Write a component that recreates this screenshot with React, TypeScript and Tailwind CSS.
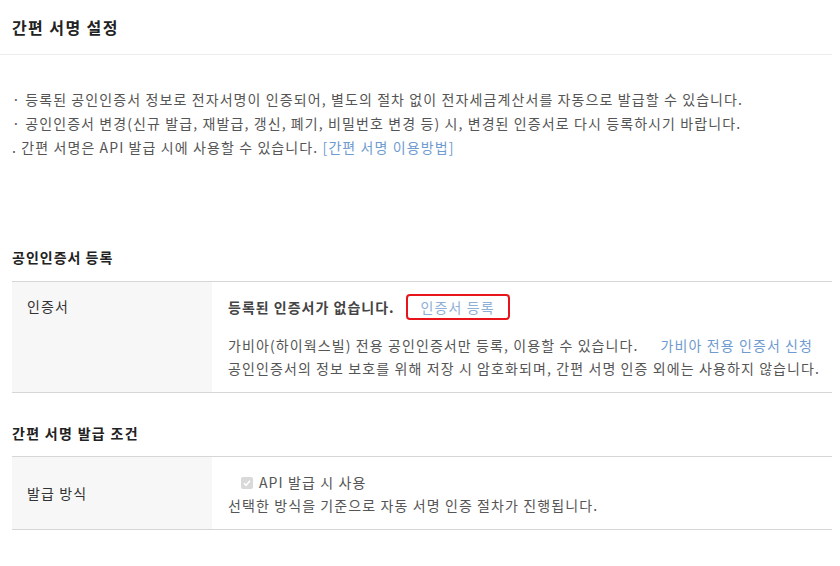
import React from "react";

const font = { fontFamily: '"Noto Sans CJK KR", "Noto Sans", sans-serif' };

export default function App() {
  return (
    <div className="w-[840px] h-[566px] bg-white text-[14px] text-[#555] tracking-[1.1px]" style={font}>
      <div className="w-[832px]">
        <div className="h-[55px] flex items-center pl-3 border-b border-[#ececec]">
          <h1 className="text-[16px] font-bold text-[#222] tracking-[1.4px]">간편 서명 설정</h1>
        </div>
        <div className="pl-3 pt-[32px] leading-[24px]">
          <p>· 등록된 공인인증서 정보로 전자서명이 인증되어, 별도의 절차 없이 전자세금계산서를 자동으로 발급할 수 있습니다.</p>
          <p>· 공인인증서 변경(신규 발급, 재발급, 갱신, 폐기, 비밀번호 변경 등) 시, 변경된 인증서로 다시 등록하시기 바랍니다.</p>
          <p>
            . 간편 서명은 API 발급 시에 사용할 수 있습니다. <span className="text-[#6f9bcf]">[간편 서명 이용방법]</span>
          </p>
        </div>
        <h2 className="pl-3 mt-[86px] text-[14px] font-bold text-[#222] leading-[24px] tracking-[1px]">공인인증서 등록</h2>
        <div className="ml-3 mt-[12px] flex border-t border-b border-[#d6d6d6]">
          <div className="w-[200px] shrink-0 bg-[#f7f7f7] pl-[15px] pt-[14px] text-[#333]">인증서</div>
          <div className="pl-4 pt-[12px] pb-[12px]">
            <div className="flex items-center h-[26px]">
              <span className="font-bold text-[#444] tracking-[1px]">등록된 인증서가 없습니다.</span>
              <button className="ml-[11px] w-[104px] h-[26px] rounded-[4px] border-2 border-[#e8141c] text-[#8fb0d6] text-[14px] leading-none">
                인증서 등록
              </button>
            </div>
            <div className="mt-[14px] leading-[23px]">
              <p>
                가비아(하이웍스빌) 전용 공인인증서만 등록, 이용할 수 있습니다.
                <span className="ml-[22px] text-[#6f9bcf]">가비아 전용 인증서 신청</span>
              </p>
              <p>공인인증서의 정보 보호를 위해 저장 시 암호화되며, 간편 서명 인증 외에는 사용하지 않습니다.</p>
            </div>
          </div>
        </div>
        <h2 className="pl-3 mt-[28px] text-[14px] font-bold text-[#222] leading-[24px] tracking-[1.3px]">간편 서명 발급 조건</h2>
        <div className="ml-3 mt-[11px] flex border-t border-b border-[#d6d6d6] h-[74px]">
          <div className="w-[200px] shrink-0 bg-[#f7f7f7] pl-[15px] pt-[1px] flex items-center text-[#333]">발급 방식</div>
          <div className="pl-4 pt-[14px] leading-[23px]">
            <label className="flex items-center pl-[13px]">
              <span className="w-[12px] h-[12px] rounded-[2px] bg-[#d9d9d9] flex items-center justify-center mr-[6px]">
                <svg width="10" height="10" viewBox="0 0 10 10">
                  <path d="M2 5.2 L4.1 7.3 L8 2.8" stroke="#fff" strokeWidth="1.6" fill="none" />
                </svg>
              </span>
              <span>API 발급 시 사용</span>
            </label>
            <p>선택한 방식을 기준으로 자동 서명 인증 절차가 진행됩니다.</p>
          </div>
        </div>
      </div>
    </div>
  );
}
